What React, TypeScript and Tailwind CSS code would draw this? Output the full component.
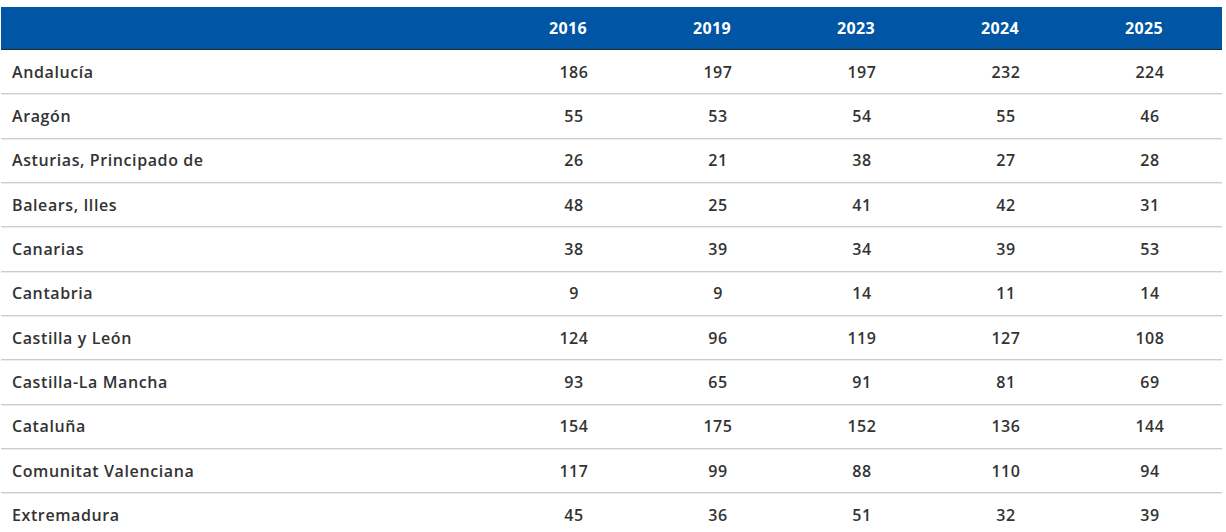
import React from "react";

const rows: [string, number[]][] = [
  ["Andalucía", [186, 197, 197, 232, 224]],
  ["Aragón", [55, 53, 54, 55, 46]],
  ["Asturias, Principado de", [26, 21, 38, 27, 28]],
  ["Balears, Illes", [48, 25, 41, 42, 31]],
  ["Canarias", [38, 39, 34, 39, 53]],
  ["Cantabria", [9, 9, 14, 11, 14]],
  ["Castilla y León", [124, 96, 119, 127, 108]],
  ["Castilla-La Mancha", [93, 65, 91, 81, 69]],
  ["Cataluña", [154, 175, 152, 136, 144]],
  ["Comunitat Valenciana", [117, 99, 88, 110, 94]],
  ["Extremadura", [45, 36, 51, 32, 39]],
];

const years = ["2016", "2019", "2023", "2024", "2025"];

export default function App() {
  return (
    <div
      className="w-[1226px] h-[532px] overflow-hidden bg-white pt-[7px] pl-[1px]"
      style={{ fontFamily: '"Open Sans", "Noto Sans", sans-serif' }}
    >
      <div className="w-[1221px]">
        <div className="grid grid-cols-[1fr_144px_144px_144px_144px_144px] h-[43px] bg-[#0055a4] border-b border-[#1c2a3a] items-center text-white font-bold text-[16px] tracking-[0.4px]">
          <div />
          {years.map((y) => (
            <div key={y} className="text-center pr-3">
              {y}
            </div>
          ))}
        </div>
        {rows.map(([name, vals]) => (
          <div
            key={name}
            className="grid grid-cols-[1fr_144px_144px_144px_144px_144px] h-[44.33px] border-b border-[#cdcdcd] shadow-[0_1px_0_#ececec] items-center text-[#333333] font-semibold text-[16px] tracking-[0.6px]"
          >
            <div className="pl-[11px]">{name}</div>
            {vals.map((v, i) => (
              <div key={i} className="text-center">
                {v}
              </div>
            ))}
          </div>
        ))}
      </div>
    </div>
  );
}
